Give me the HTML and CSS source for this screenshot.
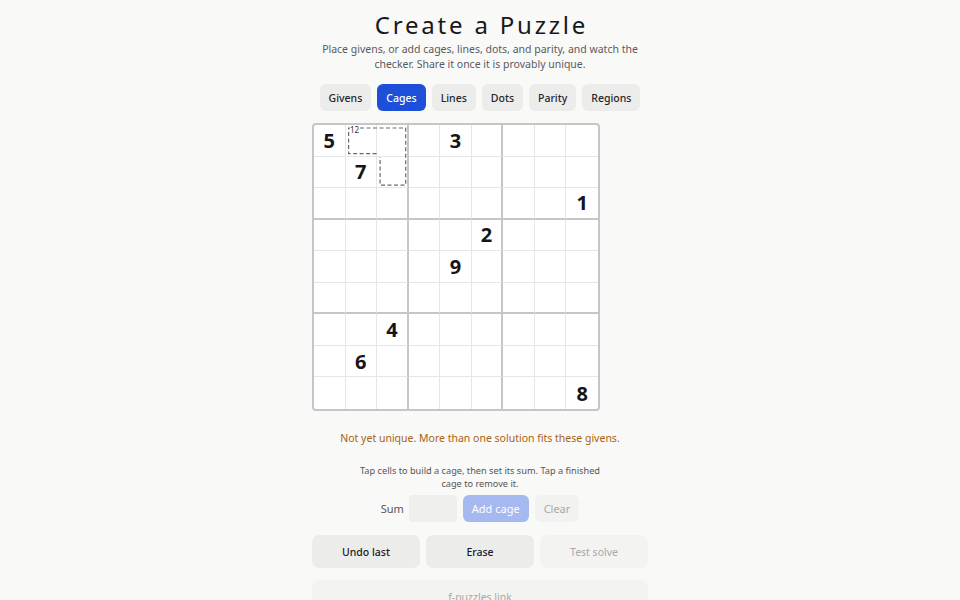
FILE: index.html
```html
<!DOCTYPE html>
<html lang="en">
<head>
<meta charset="utf-8">
<title>Create a Puzzle</title>
<link rel="stylesheet" href="styles.css">
</head>
<body>
<main class="page">
  <h1 class="title">Create a Puzzle</h1>
  <p class="subtitle">Place givens, or add cages, lines, dots, and parity, and watch the checker. Share it once it is provably unique.</p>

  <nav class="tabs">
    <button class="tab">Givens</button>
    <button class="tab tab-active">Cages</button>
    <button class="tab">Lines</button>
    <button class="tab">Dots</button>
    <button class="tab">Parity</button>
    <button class="tab">Regions</button>
  </nav>

  <div class="board-wrap">
    <div class="board">
      <div class="cell">5</div><div class="cell"></div><div class="cell box-r"></div><div class="cell"></div><div class="cell">3</div><div class="cell box-r"></div><div class="cell"></div><div class="cell"></div><div class="cell last-c"></div>
      <div class="cell"></div><div class="cell">7</div><div class="cell box-r"></div><div class="cell"></div><div class="cell"></div><div class="cell box-r"></div><div class="cell"></div><div class="cell"></div><div class="cell last-c"></div>
      <div class="cell box-b"></div><div class="cell box-b"></div><div class="cell box-r box-b"></div><div class="cell box-b"></div><div class="cell box-b"></div><div class="cell box-r box-b"></div><div class="cell box-b"></div><div class="cell box-b"></div><div class="cell last-c box-b">1</div>
      <div class="cell"></div><div class="cell"></div><div class="cell box-r"></div><div class="cell"></div><div class="cell"></div><div class="cell box-r">2</div><div class="cell"></div><div class="cell"></div><div class="cell last-c"></div>
      <div class="cell"></div><div class="cell"></div><div class="cell box-r"></div><div class="cell"></div><div class="cell">9</div><div class="cell box-r"></div><div class="cell"></div><div class="cell"></div><div class="cell last-c"></div>
      <div class="cell box-b"></div><div class="cell box-b"></div><div class="cell box-r box-b"></div><div class="cell box-b"></div><div class="cell box-b"></div><div class="cell box-r box-b"></div><div class="cell box-b"></div><div class="cell box-b"></div><div class="cell last-c box-b"></div>
      <div class="cell"></div><div class="cell"></div><div class="cell box-r">4</div><div class="cell"></div><div class="cell"></div><div class="cell box-r"></div><div class="cell"></div><div class="cell"></div><div class="cell last-c"></div>
      <div class="cell"></div><div class="cell">6</div><div class="cell box-r"></div><div class="cell"></div><div class="cell"></div><div class="cell box-r"></div><div class="cell"></div><div class="cell"></div><div class="cell last-c"></div>
      <div class="cell last-r"></div><div class="cell last-r"></div><div class="cell box-r last-r"></div><div class="cell last-r"></div><div class="cell last-r"></div><div class="cell box-r last-r"></div><div class="cell last-r"></div><div class="cell last-r"></div><div class="cell last-c last-r">8</div>
      <svg class="cages" viewBox="0 0 284 284" aria-hidden="true">
        <path class="cage-line" d="M62.6 28.6 H34.6 V3 H91.7 V60.1 H66.1 V32"/>
        <rect class="cage-label-bg" x="36" y="1" width="9.5" height="7.5"/>
        <text class="cage-sum" x="36" y="8">12</text>
      </svg>
    </div>
  </div>

  <p class="status">Not yet unique. More than one solution fits these givens.</p>

  <p class="hint">Tap cells to build a cage, then set its sum. Tap a finished cage to remove it.</p>

  <div class="sum-row">
    <label class="sum-label">Sum</label>
    <span class="sum-input"></span>
    <button class="btn-add">Add cage</button>
    <button class="btn-clear">Clear</button>
  </div>

  <div class="actions">
    <button class="action">Undo last</button>
    <button class="action">Erase</button>
    <button class="action action-disabled">Test solve</button>
  </div>

  <button class="share">f-puzzles link</button>
</main>
</body>
</html>
```

FILE: styles.css
```css
* { box-sizing: border-box; }

html, body {
  margin: 0;
  padding: 0;
  background: #f9f9f8;
  font-family: "Noto Sans", "Open Sans", sans-serif;
  color: #1b1b1b;
}

.page {
  width: 336px;
  margin: 0 auto;
  padding-top: 10px;
  display: flex;
  flex-direction: column;
  align-items: center;
}

.title {
  margin: 0;
  font-size: 24px;
  line-height: 30px;
  font-weight: 400;
  letter-spacing: 2.8px;
  padding-left: 3px;
  color: #18181b;
}

.subtitle {
  width: 340px;
  margin: 2px 0 0;
  font-size: 10.5px;
  line-height: 15px;
  color: #5a5a5e;
  text-align: center;
}

.tabs {
  display: flex;
  gap: 6px;
  margin-top: 12px;
}

button {
  font-family: inherit;
  border: none;
  cursor: pointer;
}

.tab {
  height: 27px;
  padding: 0 9px;
  border-radius: 6px;
  background: #ececeb;
  color: #26262a;
  font-size: 10.5px;
  font-weight: 500;
}

.tab-active {
  background: #1d4fd8;
  color: #ffffff;
}

.board-wrap {
  align-self: flex-start;
  margin-top: 12px;
}

.board {
  position: relative;
  width: 288px;
  height: 288px;
  border: 2px solid #c6c6c6;
  border-radius: 4px;
  background: #ffffff;
  display: grid;
  grid-template-columns: repeat(9, 1fr);
  grid-template-rows: repeat(9, 1fr);
}

.cell {
  border-right: 1px solid #e6e6e6;
  border-bottom: 1px solid #e6e6e6;
  display: flex;
  align-items: center;
  justify-content: center;
  font-size: 20px;
  font-weight: 700;
  color: #15151a;
}

.box-r { border-right: 2px solid #c6c6c6; }
.box-b { border-bottom: 2px solid #c6c6c6; }
.last-c { border-right: none; }
.last-r { border-bottom: none; }

.cages {
  position: absolute;
  left: 0;
  top: 0;
  width: 284px;
  height: 284px;
  pointer-events: none;
}

.cage-line {
  fill: none;
  stroke: #6a6a6a;
  stroke-width: 1.2;
  stroke-dasharray: 4 2.5;
}

.cage-label-bg { fill: #ffffff; }

.cage-sum {
  font-family: "Noto Sans", sans-serif;
  font-size: 8px;
  fill: #333;
}

.status {
  margin: 19px 0 0;
  font-size: 10.5px;
  line-height: 16px;
  color: #a8610f;
  text-align: center;
}

.hint {
  width: 240px;
  margin: 18px 0 0;
  font-size: 9.2px;
  line-height: 13px;
  color: #55555a;
  text-align: center;
}

.sum-row {
  display: flex;
  align-items: center;
  gap: 6px;
  margin-top: 5px;
}

.sum-label {
  font-size: 11px;
  color: #55555a;
  margin-right: -1px;
}

.sum-input {
  width: 48px;
  height: 27px;
  border-radius: 4px;
  background: #efefee;
}

.btn-add {
  height: 27px;
  padding: 0 9px;
  border-radius: 6px;
  background: #a5b8ef;
  color: #ffffff;
  font-size: 11px;
}

.btn-clear {
  height: 27px;
  padding: 0 9px;
  border-radius: 6px;
  background: #f2f2f1;
  color: #a9a9a9;
  font-size: 11px;
}

.actions {
  width: 336px;
  display: grid;
  grid-template-columns: repeat(3, 1fr);
  gap: 6px;
  margin-top: 13px;
}

.action {
  height: 33px;
  border-radius: 7px;
  background: #ececeb;
  color: #1b1b1f;
  font-size: 10.5px;
  font-weight: 500;
}

.action-disabled {
  background: #f3f3f2;
  color: #a9a9a9;
  font-weight: 400;
}

.share {
  width: 336px;
  height: 33px;
  margin-top: 12px;
  border-radius: 7px;
  background: #f3f3f2;
  color: #a9a9a9;
  font-size: 10.5px;
}
```
